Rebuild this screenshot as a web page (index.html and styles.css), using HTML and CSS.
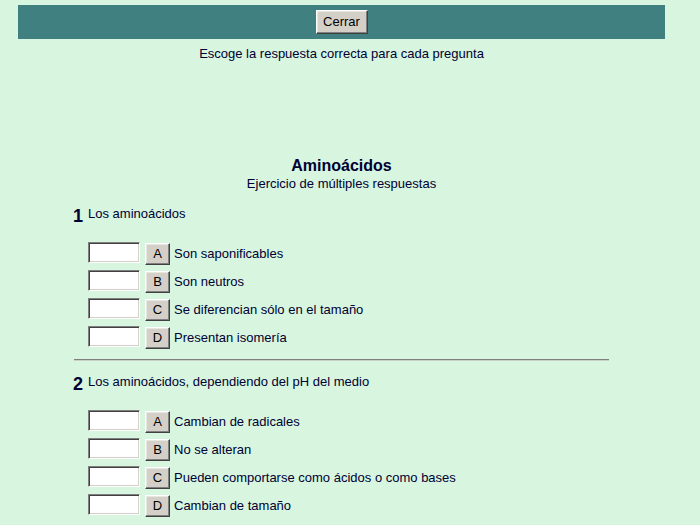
FILE: index.html
```html
<!DOCTYPE html>
<html lang="es">
<head>
<meta charset="utf-8">
<title>Aminoácidos</title>
<link rel="stylesheet" href="styles.css">
</head>
<body>
<div class="page">
  <div class="topbar"><button class="btn btn-close" type="button">Cerrar</button></div>
  <p class="instr">Escoge la respuesta correcta para cada pregunta</p>
  <h1 class="title">Aminoácidos</h1>
  <p class="subtitle">Ejercicio de múltiples respuestas</p>

  <div class="question first">
    <div class="qhead"><span class="qnum">1</span><span class="qtext">Los aminoácidos</span></div>
    <div class="options">
      <div class="opt"><input class="ans" type="text"><button class="btn letter" type="button">A</button><span class="otext">Son saponificables</span></div>
      <div class="opt"><input class="ans" type="text"><button class="btn letter" type="button">B</button><span class="otext">Son neutros</span></div>
      <div class="opt"><input class="ans" type="text"><button class="btn letter" type="button">C</button><span class="otext">Se diferencian sólo en el tamaño</span></div>
      <div class="opt"><input class="ans" type="text"><button class="btn letter" type="button">D</button><span class="otext">Presentan isomería</span></div>
    </div>
  </div>
  <hr class="sep">
  <div class="question">
    <div class="qhead"><span class="qnum">2</span><span class="qtext">Los aminoácidos, dependiendo del pH del medio</span></div>
    <div class="options">
      <div class="opt"><input class="ans" type="text"><button class="btn letter" type="button">A</button><span class="otext">Cambian de radicales</span></div>
      <div class="opt"><input class="ans" type="text"><button class="btn letter" type="button">B</button><span class="otext">No se alteran</span></div>
      <div class="opt"><input class="ans" type="text"><button class="btn letter" type="button">C</button><span class="otext">Pueden comportarse como ácidos o como bases</span></div>
      <div class="opt"><input class="ans" type="text"><button class="btn letter" type="button">D</button><span class="otext">Cambian de tamaño</span></div>
    </div>
  </div>
</div>
</body>
</html>
```
FILE: styles.css
```css
html, body {
  margin: 0;
  padding: 0;
}
body {
  background: #d7f5df;
  color: #000033;
  font-family: "Liberation Sans", Arial, sans-serif;
  font-size: 13px;
  line-height: 16px;
  overflow: hidden;
}
.page {
  width: 647px;
  margin-left: 18px;
  padding-top: 5px;
}
.topbar {
  background: #408080;
  height: 34px;
  box-sizing: border-box;
  padding-top: 5px;
  display: flex;
  justify-content: center;
  align-items: flex-start;
}
.btn {
  background: #d4d0c8;
  color: #000;
  font-family: "Liberation Sans", Arial, sans-serif;
  font-size: 13px;
  padding: 0;
  margin: 0;
  box-sizing: border-box;
  border-style: solid;
  border-width: 1px;
  border-color: #ffffff #404040 #404040 #ffffff;
  box-shadow: inset -1px -1px 0 #808080, inset 1px 1px 0 #e8e6e0;
  cursor: default;
}
.btn-close {
  width: 52px;
  height: 24px;
  line-height: 20px;
}
.instr {
  margin: 7px 0 0;
  text-align: center;
}
.title {
  margin: 94px 0 0;
  text-align: center;
  font-size: 16px;
  line-height: 20px;
  font-weight: bold;
}
.subtitle {
  margin: 0;
  text-align: center;
}
.question {
  padding-left: 55px;
  margin-top: 12px;
}
.question.first {
  margin-top: 13px;
}
.qhead {
  display: flex;
  align-items: flex-start;
  height: 20px;
}
.qnum {
  width: 15px;
  font-size: 18px;
  line-height: 18px;
  font-weight: bold;
  margin-top: 2px;
}
.qtext {
  margin-top: 1px;
}
.options {
  margin-top: 17px;
  margin-left: 15px;
}
.opt {
  display: flex;
  align-items: flex-start;
  height: 28px;
}
.ans {
  width: 52px;
  height: 21px;
  box-sizing: border-box;
  margin: 0 5px 0 0;
  padding: 0 2px;
  background: #fff;
  border-style: solid;
  border-width: 1px;
  border-color: #808080 #ffffff #ffffff #808080;
  box-shadow: inset 1px 1px 0 #404040, inset -1px -1px 0 #d4d0c8;
  font-family: "Liberation Sans", Arial, sans-serif;
  font-size: 13px;
  outline: none;
}
.letter {
  width: 25px;
  height: 22px;
  margin-top: 1px;
  line-height: 17px;
  padding-bottom: 2px;
}
.otext {
  margin-left: 4px;
  margin-top: 4px;
}
.sep {
  width: 535px;
  height: 0;
  margin: 5px auto 0;
  border: 0;
  border-top: 1px solid #808080;
  border-bottom: 1px solid #c8d0c8;
}
```
